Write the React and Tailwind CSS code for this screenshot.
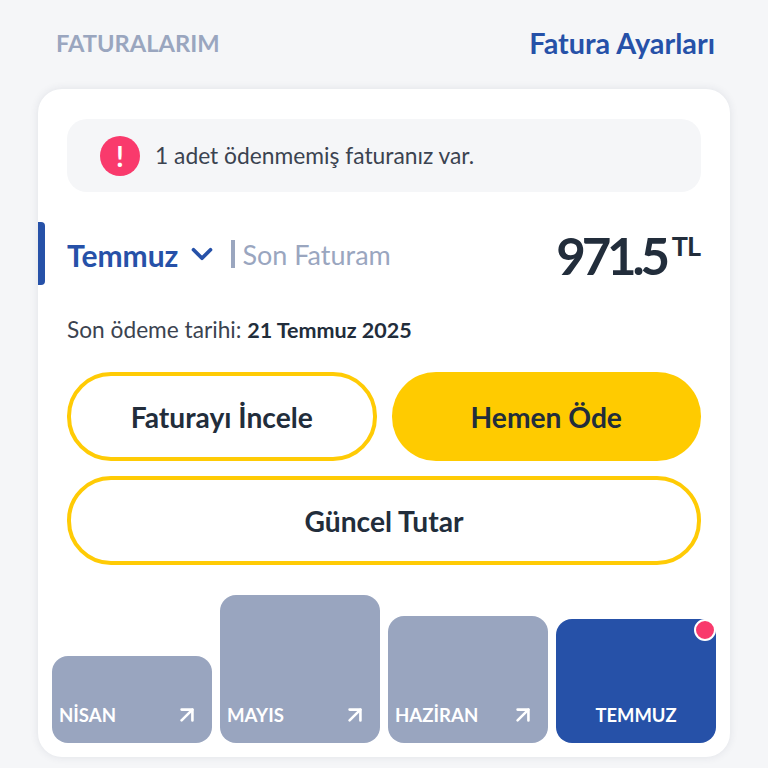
import React from 'react';
import { ChevronDown, ArrowUpRight } from 'lucide-react';

const months = [
  { name: 'NİSAN', height: 'h-[87px]' },
  { name: 'MAYIS', height: 'h-[148px]' },
  { name: 'HAZİRAN', height: 'h-[127px]' },
];

const App = () => {
  return (
    <div className="h-[768px] w-[768px] overflow-hidden bg-[#f5f6f8] font-['Lato',sans-serif] px-[38px] pt-[25px]">
      {/* Header */}
      <div className="flex items-center justify-between h-[38px] pl-[18px] pr-[15px] mb-[26px]">
        <div className="text-[23.7px] font-bold text-[#9aa6bf]">FATURALARIM</div>
        <div className="text-[28.8px] font-bold text-[#2651a8]">Fatura Ayarları</div>
      </div>

      {/* Card */}
      <div className="relative h-[668px] bg-white rounded-[24px] shadow-[0_0_8px_rgba(40,50,80,0.1)] pt-[30px]">
        <div className="mx-[29px] h-[73px] bg-[#f5f6f8] rounded-[20px] flex items-center pl-[33px] gap-[15px]">
          <div className="w-[40px] h-[40px] rounded-full bg-[#f93a6c] flex items-center justify-center text-white text-[28px] font-bold">!</div>
          <div className="text-[22.8px] text-[#3b4350]">1 adet ödenmemiş faturanız var.</div>
        </div>

        {/* Month row */}
        <div className="relative mt-[30px] h-[63px] pl-[29px] pr-[30px] flex items-center">
          <div className="absolute left-0 top-0 w-[7px] h-[63px] bg-[#2651a8] rounded-r-[4px]" />
          <div className="text-[30px] font-bold text-[#2651a8] pt-[3px]">Temmuz</div>
          <ChevronDown className="ml-[7px] w-[34px] h-[34px] text-[#2651a8]" strokeWidth={2.6} />
          <div className="ml-[12px] w-[4px] h-[28px] bg-[#9aa6bf]" />
          <div className="ml-[7px] text-[27px] text-[#9aa6bf] pt-[3px]">Son Faturam</div>
          <div className="ml-auto flex items-start text-[#222d3b] font-bold pt-[3px]">
            <span className="text-[51px] leading-none tracking-[-4.2px]">971.5</span>
            <span className="text-[27px] leading-none mt-[2px] ml-[6px] tracking-[-1px]">TL</span>
          </div>
        </div>

        <div className="mt-[30px] pl-[29px] text-[22.7px] text-[#3b4350] leading-[30px]">
          Son ödeme tarihi: <span className="text-[21.5px] font-bold text-[#222d3b]">21 Temmuz 2025</span>
        </div>

        {/* Buttons */}
        <div className="mt-[27px] px-[29px] grid grid-cols-2 gap-x-[15px] gap-y-[15px]">
          <button className="h-[89px] rounded-[44px] border-[4px] border-[#ffcb05] bg-white text-[28.2px] font-bold text-[#222d3b] pt-[2px]">Faturayı İncele</button>
          <button className="h-[89px] rounded-[44px] bg-[#ffcb00] text-[28.2px] font-bold text-[#222d3b] pt-[2px]">Hemen Öde</button>
          <button className="col-span-2 h-[89px] rounded-[44px] border-[4px] border-[#ffcb05] bg-white text-[28.2px] font-bold text-[#222d3b] pt-[2px]">Güncel Tutar</button>
        </div>

        {/* Month bars */}
        <div className="absolute left-[14px] bottom-[14px] flex items-end gap-[8px]">
          {months.map((m) => (
            <div key={m.name} className={`${m.height} w-[160px] rounded-[16px] bg-[#99a5bf] flex items-end justify-between pl-[7px] pr-[12px] pb-[15px] text-white`}>
              <span className="text-[18.6px] font-bold leading-[26px]">{m.name}</span>
              <ArrowUpRight className="w-[26px] h-[26px]" strokeWidth={2.4} />
            </div>
          ))}
          <div className="relative h-[124px] w-[160px] rounded-[16px] bg-[#2651a8] flex items-end justify-center pb-[15px] text-white">
            <span className="text-[18.4px] font-bold leading-[26px]">TEMMUZ</span>
            <div className="absolute right-0 top-0 w-[22px] h-[22px] rounded-full bg-[#f93a6c] border-2 border-white" />
          </div>
        </div>
      </div>
    </div>
  );
};

export default App;
